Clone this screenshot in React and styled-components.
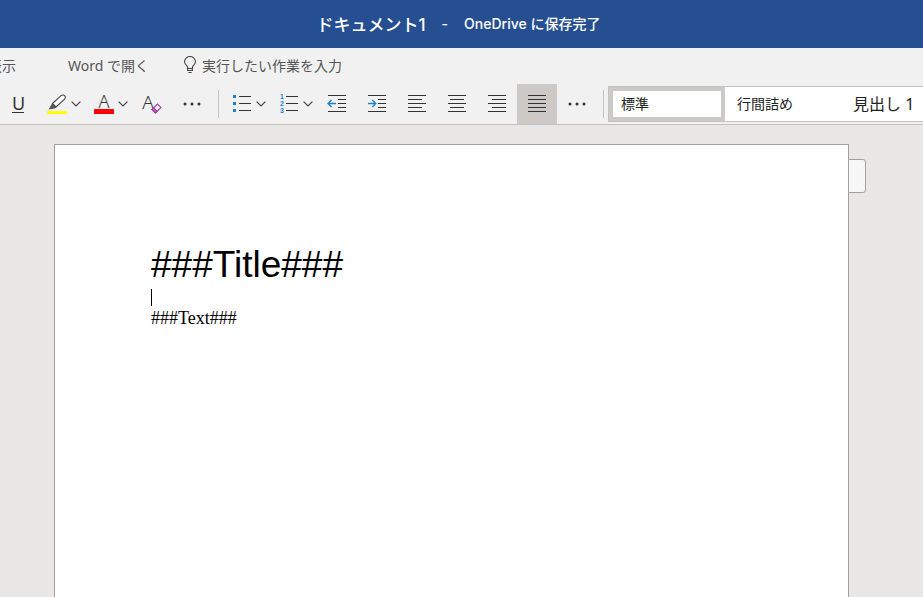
import React, { useState } from 'react';
import styled, { createGlobalStyle } from 'styled-components';

const GlobalStyle = createGlobalStyle`
  * {
    box-sizing: border-box;
  }

  body {
    margin: 0;
    background: #e8e7e6;
    color: #333;
    font-family: 'Noto Sans', 'Noto Sans CJK JP', sans-serif;
    font-size: 14px;
  }

  button, input {
    font: inherit;
    color: inherit;
  }
`;

const styleList = [
  { name: '標準' },
  { name: '行間詰め' },
  { name: '見出し 1', large: true },
];

const ChevronIcon = () => (
  <svg width="10" height="6" viewBox="0 0 10 6" fill="none" stroke="#444" strokeWidth="1.2">
    <path d="M0.6 0.6 L5 5 L9.4 0.6" />
  </svg>
);

const DotsIcon = () => (
  <svg width="18" height="4" viewBox="0 0 18 4" fill="#333">
    <circle cx="2" cy="2" r="1.5" />
    <circle cx="9" cy="2" r="1.5" />
    <circle cx="16" cy="2" r="1.5" />
  </svg>
);

const BulbIcon = () => (
  <svg width="14" height="18" viewBox="0 0 14 18" fill="none" stroke="#444" strokeWidth="1.1">
    <path d="M4.6 12.5 V11.2 C4.4 9.4 1.5 8.6 1.5 5.8 A5.3 5.1 0 0 1 12.5 5.8 C12.5 8.6 9.6 9.4 9.4 11.2 V12.5 Z" />
    <path d="M4.6 12.5 V14.5 H9.4 V12.5 M5.4 16.5 H8.6" />
  </svg>
);

const HighlightIcon = () => (
  <svg width="20" height="20" viewBox="0 0 20 20" fill="none">
    <path d="M5.5 9.5 L14 1.6 Q16.2 0.2 17.8 1.8 Q19 3.4 17.6 5.2 L9 13 Z" fill="#fafafa" stroke="#444" strokeWidth="1.1" />
    <path d="M5.2 9.2 L9.4 13.4 L7.6 14.4 L1.6 15.4 Z" fill="#555" />
    <rect y="17" width="20" height="3" fill="#ff0" />
  </svg>
);

const EraserIcon = () => (
  <svg width="11" height="11" viewBox="0 0 11 11" fill="#f8eefa" stroke="#9b3fa8" strokeWidth="1.1">
    <path d="M0.9 6.6 L6.4 1 L10 4.4 L4.4 10 Z" />
    <path d="M0.9 6.6 L2.6 4.9 L6.1 8.3 L4.4 10 Z" fill="#b56ac0" />
  </svg>
);

const BulletIcon = () => (
  <svg width="20" height="18" viewBox="-1 0 20 18" shapeRendering="crispEdges">
    {[0, 7, 14].map((y) => (
      <g key={y}>
        <rect x="0" y={y} width="3" height="3" fill="#1e7fc9" />
        <rect x="6" y={y + 1} width="12" height="1" fill="#333" />
      </g>
    ))}
  </svg>
);

const NumberIcon = () => (
  <svg width="20" height="24" viewBox="-1 0 20 24" fontFamily="Liberation Sans" fontSize="7" fontWeight="700">
    {[5, 12, 19].map((y, i) => (
      <g key={y}>
        <text x="0" y={y + 2} fill="#1e7fc9">{i + 1}</text>
        <rect x="6" y={y - 1} width="12" height="1" fill="#333" />
      </g>
    ))}
  </svg>
);

// each line is [start, length] inside an 18px wide icon
const lineSets = {
  left: [[0, 18], [0, 14], [0, 18], [0, 14], [0, 18]],
  center: [[0, 18], [2, 14], [0, 18], [2, 14], [0, 18]],
  right: [[0, 18], [4, 14], [0, 18], [4, 14], [0, 18]],
  justify: [[0, 18], [0, 18], [0, 18], [0, 18], [0, 18]],
  indent: [[0, 18], [10, 8], [10, 8], [10, 8], [0, 18]],
};

const LinesIcon = ({ type, arrow }) => (
  <svg width="20" height="18" viewBox="0 0 20 18">
    {lineSets[type].map(([x, width], i) => (
      <rect key={i} x={x + 1} y={i * 4} width={width} height="1" fill="#333" shapeRendering="crispEdges" />
    ))}
    {arrow === 'out' && <path d="M9 8.5 H1.2 M4.6 5 L1 8.5 L4.6 12" fill="none" stroke="#1e7fc9" strokeWidth="1.3" />}
    {arrow === 'in' && <path d="M1 8.5 H8.6 M5.2 5 L8.8 8.5 L5.2 12" fill="none" stroke="#1e7fc9" strokeWidth="1.3" />}
  </svg>
);

const alignments = [
  { id: 'left', label: '左揃え' },
  { id: 'center', label: '中央揃え' },
  { id: 'right', label: '右揃え' },
  { id: 'justify', label: '両端揃え' },
];

const App = () => {
  const [align, setAlign] = useState('justify');
  const [selected, setSelected] = useState('標準');

  return (
    <Window>
      <GlobalStyle />
      <TitleBar>
        <DocName>ドキュメント1</DocName>
        <span>-</span>
        <span>OneDrive に保存完了</span>
      </TitleBar>

      <MenuBar>
        <MenuButton>表示</MenuButton>
        <MenuButton>Word で開く</MenuButton>
        <TellMe>
          <BulbIcon />
          <TellMeInput aria-label="実行したい作業を入力" placeholder="実行したい作業を入力" />
        </TellMe>
      </MenuBar>

      <Toolbar>
        <ToolButton aria-label="下線"><Underlined>U</Underlined></ToolButton>
        <SplitButton aria-label="蛍光ペンの色"><HighlightIcon /><ChevronIcon /></SplitButton>
        <SplitButton aria-label="フォントの色"><FontColor>A</FontColor><ChevronIcon /></SplitButton>
        <ToolButton aria-label="書式のクリア">
          <ClearFormat>A<EraserIcon /></ClearFormat>
        </ToolButton>
        <ToolButton aria-label="その他のフォント オプション"><DotsIcon /></ToolButton>
        <Divider />
        <SplitButton aria-label="箇条書き"><BulletIcon /><ChevronIcon /></SplitButton>
        <SplitButton aria-label="段落番号"><NumberIcon /><ChevronIcon /></SplitButton>
        <ToolButton aria-label="インデントを減らす"><LinesIcon type="indent" arrow="out" /></ToolButton>
        <ToolButton aria-label="インデントを増やす"><LinesIcon type="indent" arrow="in" /></ToolButton>
        {alignments.map(({ id, label }) => (
          <ToolButton key={id} aria-label={label} $active={align === id} onClick={() => setAlign(id)}>
            <LinesIcon type={id} />
          </ToolButton>
        ))}
        <ToolButton aria-label="その他の段落オプション"><DotsIcon /></ToolButton>
        <Divider />
        <Gallery>
          {styleList.map(({ name, large }) => (
            <StyleButton key={name} $large={large} $active={selected === name} onClick={() => setSelected(name)}>
              {name}
            </StyleButton>
          ))}
        </Gallery>
      </Toolbar>

      <Canvas>
        <Page>
          <Title>###Title###</Title>
          <EmptyLine><Caret /></EmptyLine>
          <Text>###Text###</Text>
          <PageTab aria-label="ヘッダーとフッター" />
        </Page>
      </Canvas>
    </Window>
  );
};

const Window = styled.div`
  min-height: 100vh;
  display: flex;
  flex-direction: column;
`;

const TitleBar = styled.header`
  height: 48px;
  padding: 0 6px 2px 0;
  display: flex;
  align-items: center;
  justify-content: center;
  gap: 16px;
  background: #264f91;
  color: #fff;
  font-family: Inter, 'Noto Sans CJK JP', sans-serif;
  font-weight: 500;
`;

const DocName = styled.span`
  font-size: 17px;
`;

const MenuBar = styled.nav`
  height: 36px;
  padding-bottom: 2px;
  display: flex;
  align-items: center;
  gap: 52px;
  overflow: hidden;
  background: #f1f1f1;
  color: #555;

  & > :first-child {
    margin-left: -12px;
  }
`;

const MenuButton = styled.button`
  padding: 0;
  border: none;
  background: none;
  white-space: nowrap;
`;

const TellMe = styled.label`
  margin-left: -18px;
  flex: 1;
  display: flex;
  align-items: center;
  gap: 5px;
`;

const TellMeInput = styled.input`
  flex: 1;
  padding: 0;
  border: none;
  outline: none;
  background: none;

  &::placeholder {
    color: #555;
    opacity: 1;
  }
`;

const Toolbar = styled.div`
  height: 41px;
  display: flex;
  align-items: center;
  overflow: hidden;
  background: #f1f1f1;
  border-bottom: 1px solid #c2c2c2;

  & > :first-child {
    margin-left: -2px;
  }
`;

const ToolButton = styled.button`
  flex: none;
  width: 40px;
  height: 40px;
  padding: 0;
  display: flex;
  align-items: center;
  justify-content: center;
  border: none;
  background: ${({ $active }) => ($active ? '#cdc9c6' : 'transparent')};
`;

const SplitButton = styled(ToolButton)`
  width: 47px;
  padding-left: 5px;
  gap: 4px;
`;

const Underlined = styled.span`
  width: 12px;
  height: 18px;
  border-bottom: 1px solid #333;
  font-size: 18px;
  line-height: 16px;
  text-align: center;
`;

const FontColor = styled.span`
  width: 20px;
  height: 20px;
  border-bottom: 5px solid #f00;
  font-size: 18px;
  font-weight: 300;
  line-height: 14px;
`;

const ClearFormat = styled.span`
  padding-bottom: 4px;
  display: flex;
  align-items: flex-end;
  font-size: 19px;
  font-weight: 300;
  line-height: 24px;

  svg {
    margin-left: -3px;
  }
`;

const Divider = styled.span`
  flex: none;
  width: 1px;
  height: 28px;
  margin: 0 4px 0 6px;
  background: #c2c2c2;
`;

const Gallery = styled.div`
  flex: 1 0 auto;
  height: 36px;
  display: flex;
  border: 1px solid #c2c2c2;
  border-right: none;
  background: #fff;
`;

const StyleButton = styled.button`
  width: 116px;
  padding: 0 8px;
  border: 4px solid ${({ $active }) => ($active ? '#cdc9c6' : 'transparent')};
  background: #fff;
  color: #222;
  font-size: ${({ $large }) => ($large ? '16px' : '14px')};
  line-height: 24px;
  text-align: left;
  white-space: nowrap;
`;

const Canvas = styled.main`
  flex: 1;
  padding: 19px 20px 0 0;
  display: flex;
  justify-content: center;
`;

const Page = styled.article`
  position: relative;
  width: 100%;
  max-width: 795px;
  padding: 96px;
  border: 1px solid #a0a0a0;
  border-bottom: none;
  background: #fff;
  color: #000;
`;

const PageTab = styled.button`
  position: absolute;
  top: 14px;
  left: 100%;
  width: 18px;
  height: 34px;
  border: 1px solid #a0a0a0;
  border-radius: 0 3px 3px 0;
  background: #f7f7f7;
`;

const Title = styled.h1`
  margin: 0;
  font-family: 'Liberation Sans', Arial, sans-serif;
  font-size: 37px;
  font-weight: 400;
  line-height: 48px;
`;

const EmptyLine = styled.p`
  height: 17px;
  margin: 0;
`;

const Caret = styled.span`
  display: block;
  width: 1px;
  height: 17px;
  background: #000;
`;

const Text = styled.p`
  margin: 0;
  font-family: 'Liberation Serif', 'Times New Roman', serif;
  font-size: 18px;
  line-height: 24px;
`;

export default App;
